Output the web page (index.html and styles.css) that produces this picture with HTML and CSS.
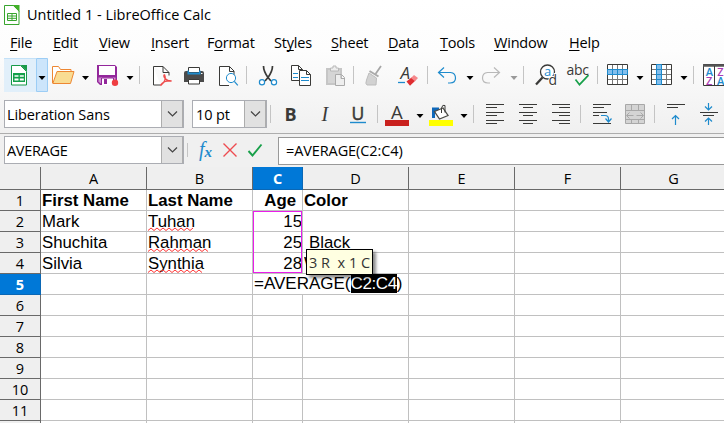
FILE: index.html
```html
<!DOCTYPE html>
<html lang="en">
<head>
<meta charset="utf-8">
<title>Untitled 1 - LibreOffice Calc</title>
<link rel="stylesheet" href="styles.css">
</head>
<body>
<div class="window">
  <header class="titlebar">
    <svg class="app-icon" width="17" height="21" viewBox="4 3 17 21"><path d="M4.500 4.500h9l5.500 5.500v13.500h-14.500z" fill="#fff" stroke="#38a52e"/><path d="M12.500 4h7v7z" fill="#43b02a"/><path d="M7.500 12.500h9v7h-9zM7.500 15h9M7.500 17.300h9M12 12.500v7" fill="none" stroke="#38a52e"/></svg>
    <span class="title">Untitled 1 - LibreOffice Calc</span>
  </header>
  <nav class="menu">
    <span class="m-file"><u>F</u>ile</span><span class="m-edit"><u>E</u>dit</span><span class="m-view"><u>V</u>iew</span><span class="m-insert"><u>I</u>nsert</span><span class="m-format">F<u>o</u>rmat</span><span class="m-styles">St<u>y</u>les</span><span class="m-sheet"><u>S</u>heet</span><span class="m-data"><u>D</u>ata</span><span class="m-tools"><u>T</u>ools</span><span class="m-window"><u>W</u>indow</span><span class="m-help"><u>H</u>elp</span>
  </nav>
  <div class="toolbar standard">
    <svg width="48" height="38" viewBox="0 57 48 38"><path d="M4 58h32v34H4z" fill="#e1effa"/><path d="M4 58.500h32" stroke="#c3e1f8"/><path d="M36.500 58.500h11v33h-11z" fill="#cce5fb" stroke="#9ccdf5"/><path d="M11.500 65.500h9l6 6v13.500h-15z" fill="#fff" stroke="#189a48"/><path d="M20.500 65h6.500v6.500z" fill="#189a48"/><path d="M13 73h12v9H13z" fill="#13a04b"/><path d="M14.500 75.200h4v1.600h-4zM19.800 75.200h4v1.600h-4zM14.500 78.600h4v1.800h-4zM19.800 78.600h4v1.800h-4z" fill="#fff"/><path d="M38.500 76h7L42 80z"/></svg>
    <svg width="44" height="38" viewBox="48 57 44 38"><path d="M52.500 83V66.500h6l2 3h10.500v4" fill="#fff" stroke="#ed8733"/><path d="M52.800 83.500L57 71.500h17l-3.500 12z" fill="#f9dc93" stroke="#ed8733"/><path d="M82 76h7l-3.500 4z"/></svg>
    <svg width="45" height="38" viewBox="92 57 45 38"><path d="M97 65h18l2 2v18H100l-3-3z" fill="#93279b"/><path d="M99 66h16v9H99z" fill="#fff"/><path d="M98.500 77.500h17v6h-15l-2-2z" fill="#cf91d2"/><path d="M102 78h11v7h-11z" fill="#fff"/><path d="M102 78h11M101.500 78v7M113.500 78v7" stroke="#93279b"/><path d="M104 79h3v5h-3z" fill="#93279b"/><circle cx="115" cy="82.800" r="3.200" fill="#ef3e42"/><path d="M126.500 76h7l-3.500 4z"/></svg>
    <svg width="41" height="38" viewBox="137 57 41 38"><path d="M139.500 66v18" stroke="#c4c4c4"/><path d="M153.500 66.500h9.500l6 6v3M153.500 66.500v18.500h7M163 66.500v6h6" fill="#fff" stroke="#3a3a38"/><path d="M164.500 74.500c2 4 0 8-4 11.200M164.500 74.500c-2 2 2 7 7 6.500-4-1-9 1-11 4" fill="none" stroke="#ee4b4b" stroke-width="1.300"/></svg>
    <svg width="35" height="38" viewBox="178 57 35 38"><path d="M184 73q0-2 2-2h16q2 0 2 2v9h-20z" fill="#4b4b4b"/><path d="M188.500 67.500h11v5h-11z" fill="#fff" stroke="#3a3a38"/><path d="M187.500 74.500v-4h1.500v2h10v-2h1.500v4z" fill="#1e8bcd"/><path d="M188.500 79.500h11v4.500h-11z" fill="#fff" stroke="#3a3a38"/><path d="M201 73.500h1.500" stroke="#fff"/></svg>
    <svg width="32" height="38" viewBox="213 57 32 38"><path d="M229 85.500h-9.500v-19h10l4.500 4.500v4M229.500 66.500v5h4.500" fill="#fff" stroke="#3a3a38"/><circle cx="231" cy="78" r="4.600" fill="#fff" stroke="#1e8bcd"/><path d="M234.300 81.300l3.500 4" stroke="#1e8bcd" stroke-width="1.200"/></svg>
    <svg width="37" height="38" viewBox="245 57 37 38"><path d="M246.500 66v18" stroke="#c4c4c4"/><path d="M263.500 66c0 4 2 8 4.500 11.500l3 3.500M272.500 66c0 4-2 8-4.500 11.500l-3 3.500" stroke="#3a3a38" stroke-width="1.700" fill="none"/><g fill="#fff" stroke="#1e8bcd" stroke-width="1.200"><circle cx="262" cy="82.200" r="2.600"/><circle cx="274" cy="82.200" r="2.600"/></g></svg>
    <svg width="38" height="38" viewBox="282 57 38 38"><path d="M291.500 65.500h7l4 4v11h-11zM298.500 65.500v4h4" fill="#fff" stroke="#3a3a38"/><path d="M293 73.500h5M293 77.500h5" stroke="#1e8bcd"/><path d="M299.500 70.500h7l4 4v11h-11zM306.500 70.500v4h4" fill="#fff" stroke="#3a3a38"/><path d="M301 77.500h8M301 80.500h8" stroke="#1e8bcd"/></svg>
    <svg width="31" height="38" viewBox="320 57 31 38"><path d="M326 68h16v17h-16z" fill="#c6c6c6"/><path d="M328 70h12v13h-12z" fill="#d5d5d5"/><path d="M330.500 71v-3h2.500v-2h3v2h2.500v3z" fill="#ededed" stroke="#b8b8b8"/><path d="M335.500 74.500h6l3 3v8h-9zM341 74.500v4h3.500" fill="#eee" stroke="#aaa"/></svg>
    <svg width="39" height="38" viewBox="351 57 39 38"><path d="M353.500 66v18" stroke="#c4c4c4"/><path d="M381 66l-5.500 8" stroke="#a5a5a5" stroke-width="1.700"/><path d="M369.500 71l9 5.500" stroke="#aaa" stroke-width="2"/><path d="M369 73l7.500 5-.5 7h-9q-2-1-.5-5z" fill="#d2d2d2" stroke="#bdbdbd"/></svg>
    <svg width="35" height="38" viewBox="390 57 35 38"><text class="glyph" x="400.500" y="79" font-size="17" font-style="italic">A</text><path d="M398 82.500h7" stroke="#1e8bcd" stroke-width="1.300"/><path d="M406.500 81.500l5-4 4 3-5.500 5.300z" fill="#df2d30"/><path d="M411 78l3-3 4 3-3 3.200z" fill="#f5888b"/></svg>
    <svg width="54" height="38" viewBox="425 57 54 38"><path d="M427.500 66v18" stroke="#c4c4c4"/><path d="M444 67.500l-5.500 5 5.500 5M438.500 72.500h12q5 .5 5 5.500 0 5-5.500 5h-2" fill="none" stroke="#1e8bcd" stroke-width="1.200"/><path d="M466.500 76h7l-3.500 4z"/></svg>
    <svg width="43" height="38" viewBox="479 57 43 38"><path d="M494 67.500l5.500 5-5.500 5M499.500 72.500h-12q-5 .5-5 5.500 0 5 5.500 5h2" fill="none" stroke="#b9b9b9" stroke-width="1.200"/><path d="M510.500 76h7l-3.500 4z" fill="#999"/></svg>
    <svg width="39" height="38" viewBox="522 57 39 38"><path d="M523.500 66v18" stroke="#c4c4c4"/><circle cx="547.500" cy="72" r="7" fill="#fff" stroke="#3a3a38" stroke-width="1.300"/><path d="M542.500 77.500l-6.500 7" stroke="#3a3a38" stroke-width="2.300"/><text class="glyph blue" x="544" y="76" font-size="13">a</text><text class="glyph halo" x="548.500" y="85" font-size="14">d</text></svg>
    <svg width="34" height="38" viewBox="561 57 34 38"><text class="glyph" x="566.500" y="75" font-size="14" textLength="22.500">abc</text><path d="M575.500 79.500l4 5.200 9-9.500" fill="none" stroke="#18a04a" stroke-width="1.700"/></svg>
    <svg width="52" height="38" viewBox="595 57 52 38"><path d="M597.500 66v18" stroke="#c4c4c4"/><path d="M607.500 64.500h20v20h-20z" fill="#fff"/><path d="M612.500 65v20M617.500 65v20M622.500 65v20M608 74.500h20M608 79.500h20" stroke="#777"/><path d="M607.500 64.500h20v20h-20z" fill="none" stroke="#3a3a38"/><path d="M607.500 69.500h20v5h-20z" fill="#83beec" stroke="#1e8bcd"/><path d="M612.500 70v4M617.500 70v4M622.500 70v4" stroke="#1e8bcd"/><path d="M636.500 76h7l-3.500 4z"/></svg>
    <svg width="44" height="38" viewBox="647 57 44 38"><path d="M651.500 64.500h20v20h-20z" fill="#fff"/><path d="M661.500 65v20M666.500 65v20M652 69.500h20M652 74.500h20M652 79.500h20" stroke="#777"/><path d="M651.500 64.500h20v20h-20z" fill="none" stroke="#3a3a38"/><path d="M656.500 64.500h5v20h-5z" fill="#83beec" stroke="#1e8bcd"/><path d="M657 69.500h4M657 74.500h4M657 79.500h4" stroke="#1e8bcd"/><path d="M680.500 76h7l-3.500 4z"/></svg>
    <svg width="33" height="38" viewBox="691 57 33 38"><path d="M693.500 66v18" stroke="#c4c4c4"/><path d="M703.500 64.500h25v21h-25z" fill="#fff" stroke="#3a3a38"/><path d="M703 65.500h22" stroke="#555" stroke-width="2.500"/><path d="M714.500 66v19" stroke="#3a3a38"/><g class="sort"><text x="705.800" y="75.500" class="blue">A</text><text x="706" y="84.500" class="violet">Z</text><text x="717.200" y="75.500" class="violet">Z</text><text x="717" y="84.500" class="blue">A</text></g></svg>
  </div>
  <div class="toolbar formatting">
    <div class="combo font-name"><span class="value v-font">Liberation Sans</span><i class="drop"><svg width="11" height="6" viewBox="0 0 11 6"><path d="M1 .5l4.500 4.500L10 .5"/></svg></i></div>
    <div class="combo font-size"><span class="value v-size">10 pt</span><i class="drop"><svg width="11" height="6" viewBox="0 0 11 6"><path d="M1 .5l4.500 4.500L10 .5"/></svg></i></div>
    <svg width="38" height="38" viewBox="267 95 38 38"><path d="M270.500 105v18" stroke="#c4c4c4"/><text class="bold" x="284.500" y="120.500" font-size="18">B</text></svg>
    <svg width="40" height="38" viewBox="305 95 40 38"><text class="italic" x="321.500" y="120.500" font-size="20">I</text></svg>
    <svg width="30" height="38" viewBox="345 95 30 38"><text class="glyph stroke" x="351.500" y="119.500" font-size="17.500">U</text><path d="M350 122.500h16" stroke="#1e8bcd" stroke-width="1.400"/></svg>
    <svg width="52" height="38" viewBox="375 95 52 38"><path d="M377.500 105v18" stroke="#c4c4c4"/><text class="glyph" x="391" y="118.500" font-size="18.500">A</text><path d="M385 120h24v6h-24z" fill="#c9211e"/><path d="M416.500 114h7l-3.500 4z"/></svg>
    <svg width="45" height="38" viewBox="427 95 45 38"><path d="M432 118v-10.500h7v2.500l-4 3v5z" fill="#0f68ba"/><path d="M434.500 111.500l8.500-3.500 5 7.500-8.500 3.500z" fill="#fff" stroke="#4b4b46" stroke-width="1.300"/><path d="M441.500 113v-5q1-4 3.500-2.500v7" fill="none" stroke="#3a3a38"/><path d="M429 120h24v6h-24z" fill="#ff0"/><path d="M460.500 114h7l-3.500 4z"/></svg>
    <svg width="41" height="38" viewBox="472 95 41 38"><path d="M473.500 105v18" stroke="#c4c4c4"/><path class="lines" d="M486 104.500h18M486 107.500h11M486 112.500h18M486 115.500h11M486 120.500h18M486 123.500h11"/></svg>
    <svg width="33" height="38" viewBox="513 95 33 38"><path class="lines" d="M519 104.500h18M523 107.500h10M519 112.500h18M523 115.500h10M519 120.500h18M523 123.500h10"/></svg>
    <svg width="32" height="38" viewBox="546 95 32 38"><path class="lines" d="M552 104.500h18M559 107.500h11M552 112.500h18M559 115.500h11M552 120.500h18M559 123.500h11"/></svg>
    <svg width="40" height="38" viewBox="578 95 40 38"><path d="M580.500 105v18" stroke="#c4c4c4"/><path class="lines" d="M593 104.500h18M593 107.500h11M593 112.500h14M593 115.500h6M593 123.500h18"/><path d="M601 115.500h4q3.500 0 3.500 3.500v3M605.500 118.500l3 3.500 3-3.500" fill="none" stroke="#1e8bcd" stroke-width="1.200"/></svg>
    <svg width="35" height="38" viewBox="618 95 35 38"><path d="M625.500 104.500h19v19h-19z" fill="#d4d4d4" stroke="#a8a8a8"/><path d="M625 110.500h20M625 119.500h20M631.500 104v6M638.500 104v6M631.500 120v4M638.500 120v4M627 115.500h6.500M629.500 112.500l-3 3 3 3M636.500 115.500h6.500M640.500 112.500l3 3-3 3" fill="none" stroke="#a8a8a8"/></svg>
    <svg width="41" height="38" viewBox="653 95 41 38"><path d="M654.500 105v18" stroke="#c4c4c4"/><path class="lines" d="M667 104.500h18M667 107.500h11"/><path d="M675.500 125v-9.500M672 119l3.500-3.500 3.500 3.500" fill="none" stroke="#1e8bcd" stroke-width="1.200"/></svg>
    <svg width="30" height="38" viewBox="694 95 30 38"><path class="lines" d="M700 112.500h18M703 115.500h11"/><path d="M708.500 103v7M705 106.500l3.500 3.500 3.500-3.500M708.500 125v-7M705 121.500l3.500-3.500 3.500 3.500" fill="none" stroke="#1e8bcd" stroke-width="1.200"/></svg>
  </div>
  <div class="formula-bar">
    <div class="combo name-box"><span class="value v-name">AVERAGE</span><i class="drop"><svg width="11" height="6" viewBox="0 0 11 6"><path d="M1 .5l4.500 4.500L10 .5"/></svg></i></div>
    <svg width="95" height="33" viewBox="184 134 95 33"><path d="M187.500 143v14" stroke="#c4c4c4"/><text class="fx" x="199" y="156" font-size="20">f</text><text class="fx strong" x="204.500" y="157" font-size="15">x</text><path d="M223.500 143.500l13 13M236.500 143.500l-13 13" stroke="#ee4b50" stroke-width="1.400"/><path d="M248.500 151l4 4.500 9-11" fill="none" stroke="#18a04a" stroke-width="1.900"/></svg>
    <div class="input"><span class="v-formula">=AVERAGE(C2:C4)</span></div>
  </div>
  <main class="sheet">
    <b class="h corner"></b><b class="h col">A</b><b class="h col">B</b><b class="h col active">C</b><b class="h col">D</b><b class="h col">E</b><b class="h col">F</b><b class="h col">G</b>
    <b class="h">1</b><i class="head">First Name</i><i class="head">Last Name</i><i class="head num">Age</i><i class="head">Color</i><i></i><i></i><i></i>
    <b class="h">2</b><i>Mark</i><i>Tuhan<svg class="spell" width="45" height="5" viewBox="0 0 45 5"><path d="M0 3.500l3-2.500 3 2.500 3-2.500 3 2.500 3-2.500 3 2.500 3-2.500 3 2.500 3-2.500 3 2.500 3-2.500 3 2.500 3-2.500 3 2.500 3-2.500"/></svg></i><i class="num">15<span class="range"></span></i><i></i><i></i><i></i><i></i>
    <b class="h">3</b><i>Shuchita</i><i>Rahman<svg class="spell" width="61" height="5" viewBox="0 0 61 5"><path d="M0 3.500l3-2.500 3 2.500 3-2.500 3 2.500 3-2.500 3 2.500 3-2.500 3 2.500 3-2.500 3 2.500 3-2.500 3 2.500 3-2.500 3 2.500 3-2.500 3 2.500 3-2.500 3 2.500 3-2.500 3 2.500"/></svg></i><i class="num">25</i><i class="indent">Black</i><i></i><i></i><i></i>
    <b class="h">4</b><i>Silvia</i><i>Synthia<svg class="spell" width="56" height="5" viewBox="0 0 56 5"><path d="M0 3.500l3-2.500 3 2.500 3-2.500 3 2.500 3-2.500 3 2.500 3-2.500 3 2.500 3-2.500 3 2.500 3-2.500 3 2.500 3-2.500 3 2.500 3-2.500 3 2.500 3-2.500 3 2.500"/></svg></i><i class="num">28</i><i><span class="clipped">W</span><span class="tip"><span class="v-tip">3 R&nbsp; x 1 C</span></span></i><i></i><i></i><i></i>
    <b class="h active">5</b><i></i><i></i><i class="edit"><span class="editor">=AVERAGE(<mark>C2:C4</mark>)</span></i><i></i><i></i><i></i><i></i>
    <b class="h">6</b><i></i><i></i><i></i><i></i><i></i><i></i><i></i>
    <b class="h">7</b><i></i><i></i><i></i><i></i><i></i><i></i><i></i>
    <b class="h">8</b><i></i><i></i><i></i><i></i><i></i><i></i><i></i>
    <b class="h">9</b><i></i><i></i><i></i><i></i><i></i><i></i><i></i>
    <b class="h">10</b><i></i><i></i><i></i><i></i><i></i><i></i><i></i>
    <b class="h">11</b><i></i><i></i><i></i><i></i><i></i><i></i><i></i>
    <b class="h"></b><i></i><i></i><i></i><i></i><i></i><i></i><i></i>
  </main>
</div>
</body>
</html>
```
FILE: styles.css
```css
* { box-sizing: border-box; }
body { margin: 0; width: 724px; height: 423px; overflow: hidden; background: #fff; color: #000; font-family: "Open Sans", "Noto Sans", sans-serif; font-size: 15px; }
.window { display: flex; flex-direction: column; width: 724px; height: 423px; overflow: hidden; background: linear-gradient(#fff 0, #fdfdfd 50px, #f0f0f0 133px); }
.window > * { flex: none; }
svg { display: block; flex: none; }
i { font-style: normal; }

.titlebar { display: flex; align-items: center; height: 28px; padding-left: 4px; }
.title { margin-left: 6px; white-space: nowrap; font-size: 14.5px; }
.menu { display: flex; height: 29px; padding-left: 10px; line-height: 30px; font-size: 14.5px; letter-spacing: -0.2px; }
.menu span { flex: none; white-space: nowrap; }
.menu u { text-underline-offset: 2px; text-decoration-thickness: 1px; text-decoration-skip-ink: none; }
.m-file { width: 43px; }
.m-edit { width: 46px; }
.m-view { width: 52px; }
.m-insert { width: 56px; }
.m-format { width: 67px; }
.m-styles { width: 57px; }
.m-sheet { width: 57px; }
.m-data { width: 52px; }
.m-tools { width: 54px; }
.m-window { width: 75px; }

.toolbar { display: flex; width: 724px; height: 38px; }
.formatting { height: 39px; border-bottom: 1px solid #adadad; }
.glyph { font-family: "Open Sans", sans-serif; fill: #3a3a38; }
.glyph.blue, .blue { fill: #1e8bcd; }
.violet { fill: #ab3cb4; }
.halo { stroke: #fff; stroke-width: 2px; paint-order: stroke; }
.stroke { stroke: #3a3a38; stroke-width: 0.5px; }
.bold { font-family: "Open Sans", sans-serif; font-weight: 700; fill: #3a3a38; }
.italic { font-family: "Liberation Serif", serif; font-style: italic; fill: #3a3a38; }
.sort { font-family: "Open Sans", sans-serif; font-size: 11px; font-weight: 600; }
.lines { stroke: #3a3a38; fill: none; }
.fx { font-family: "Liberation Serif", serif; font-style: italic; fill: #1e8bcd; }
.fx.strong { font-weight: 700; }

.combo { display: flex; flex: none; height: 28px; background: #fff; border: 1px solid #abadb3; }
.font-name { width: 180px; margin: 5px 8px 0 4px; }
.font-size { width: 75px; margin-top: 5px; }
.value { flex: 1; padding-left: 2px; line-height: 27px; white-space: nowrap; }
.drop { display: grid; place-items: center; width: 22px; background: #e1e1e1; border: 1px solid #adadad; border-width: 0 1px 0 1px; }
.drop path { fill: none; stroke: #444; stroke-width: 1.2; }
.v-font { font-size: 14.5px; letter-spacing: -0.1px; }
.v-size { padding-left: 3px; font-size: 14.5px; letter-spacing: -0.1px; }
.v-name { font-size: 14.5px; letter-spacing: -0.3px; }

.formula-bar { display: flex; height: 33px; background: #f0f0f0; }
.name-box { width: 180px; margin: 2px 0 0 4px; }
.input { flex: 1; height: 28px; margin-top: 3px; margin-left: -1px; padding-left: 7px; line-height: 26px; font-size: 14.5px; letter-spacing: -0.1px; background: #fff; border: 1px solid #999; border-right: 0; }

.sheet { display: grid; grid-template-columns: 41px 106px 106px 50px repeat(4, 106px); grid-template-rows: 23px; grid-auto-rows: 21px; width: 727px; font-family: "Liberation Sans", Arial, sans-serif; font-size: 16.8px; }
.sheet i { position: relative; padding-left: 1px; line-height: 22px; white-space: nowrap; background: #fff; border-right: 1px solid #c0c0c0; border-bottom: 1px solid #c0c0c0; }
.h { font: 400 14.5px/21px "Open Sans", sans-serif; text-align: center; background: #efefef; border-right: 1px solid #696969; border-bottom: 1px solid #696969; }
.col { line-height: 23px; }
.h.active { color: #fff; font-weight: 700; background: #0078d7; border-color: #0a67b5; }
.sheet .head { font-weight: 700; }
.sheet .num { padding: 0; text-align: right; }
.sheet .head.num { padding-right: 6px; }
.sheet .indent { padding-left: 6px; }
.spell { position: absolute; top: 16px; left: 1px; z-index: 1; fill: none; stroke: #f33; stroke-width: 1; }
.range { position: absolute; z-index: 1; top: 0; left: 0; width: 49px; height: 62px; border: 1px solid #e91ee9; }
.clipped { display: block; width: 3px; height: 20px; overflow: hidden; }
.tip { position: absolute; z-index: 3; top: -4px; left: 3px; width: 67px; height: 26px; padding-left: 2px; line-height: 25px; background: #ffffe1; border: 1px solid #000; box-shadow: 3px 3px 3px rgba(0, 0, 0, 0.45); font-family: "Open Sans", sans-serif; font-size: 14.5px; color: #333; }
.editor { position: absolute; z-index: 2; top: 0; left: 0; height: 20px; padding-left: 1px; line-height: 20px; font-size: 17px; background: #fff; }
.editor mark { display: inline-block; height: 19px; line-height: 20px; letter-spacing: -0.4px; background: #000; color: #fff; }
```
